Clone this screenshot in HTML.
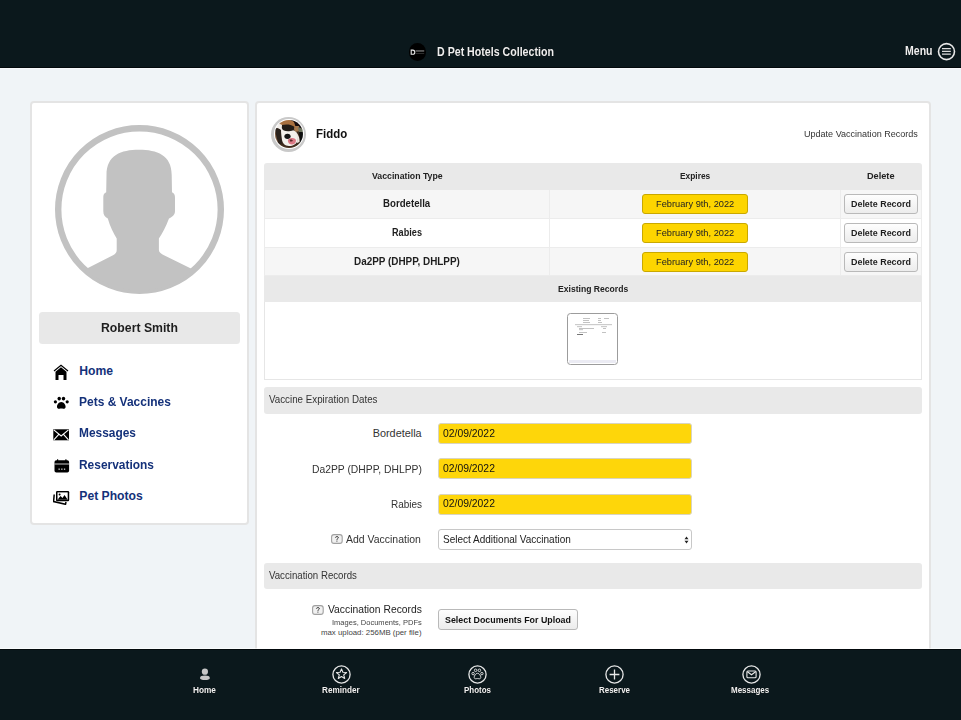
<!DOCTYPE html>
<html><head><meta charset="utf-8">
<style>
*{box-sizing:border-box;margin:0;padding:0}
html,body{width:961px;height:720px;overflow:hidden}
body{background:#f0f4f7;font-family:"Liberation Sans",sans-serif;position:relative}
.a{position:absolute}
.t{position:absolute;white-space:nowrap;line-height:1}
svg{display:block}
</style></head><body>
<div class="a" style="left:0px;top:0px;width:961px;height:68px;background:#0b181c;border-bottom:1px solid #03090c;box-shadow:0 1px 0 rgba(255,255,255,.45)"></div>
<div class="a" style="left:408.7px;top:43px;width:17.6px;height:17.6px;border-radius:50%;background:#000"><svg width="18" height="18" viewBox="0 0 18 18" style="position:absolute;left:0;top:0"><path d="M2.2 7.1h1.6c1.4 0 2 .9 2 2.1s-.6 2.1-2 2.1H2.2z" fill="none" stroke="#e8e8e8" stroke-width="1.1"/><rect x="6.6" y="7.3" width="8.6" height="1.3" fill="#7a7a7a"/><rect x="6.6" y="10.4" width="8.6" height=".6" fill="#4a4a4a"/></svg></div>
<div class="t" style="top:45.41px;font-size:13.04px;color:#efefef;left:437.00px;transform-origin:0 0;font-weight:bold;transform:scaleX(0.8155);text-shadow:0 0 1px #000;">D Pet Hotels Collection</div>
<div class="t" style="top:44.56px;font-size:12.75px;color:#efefef;left:905.00px;transform-origin:0 0;font-weight:bold;transform:scaleX(0.8261);text-shadow:0 0 1px #000;">Menu</div>
<div class="a" style="left:937px;top:42px;width:19px;height:19px"><svg width="19" height="19" viewBox="0 0 19 19"><circle cx="9.5" cy="9.6" r="8" fill="none" stroke="#e8e8e8" stroke-width="1.6"/><path d="M5 6.6 H13.8 M5 9.4 H13.8 M5 12.2 H13.8" stroke="#dcdcdc" stroke-width="1.3"/></svg></div>
<div class="a" style="left:30px;top:101px;width:219px;height:424px;background:#fff;border:2px solid #e4e4e4;border-radius:4px"></div>
<div class="a" style="left:55px;top:125.3px;width:169px;height:169px"><svg width="169" height="169" viewBox="0 0 169 169"><defs><clipPath id="cc"><circle cx="84.5" cy="84.5" r="81"/></clipPath></defs><circle cx="84.5" cy="84.5" r="81.3" fill="none" stroke="#c2c2c2" stroke-width="6.4"/><g clip-path="url(#cc)" fill="#c2c2c2"><path d="M84 24.7 C66 24.7 51.5 30 51.5 50 L51.2 67.3 C48.6 68.5 48.3 70 48.3 73 L48.3 86 C48.3 90 50 92 52.8 93.5 C55 101.5 58.5 108 61.7 113.5 L61.7 125 C61.7 127.5 60.5 129 58 130.3 L28 145.5 L20 170 L150 170 L140 145.5 L109 130.3 C106.5 129 103.9 127.5 103.9 125 L103.9 113.5 C107.5 108 111 101.5 114 93.5 C117 92 120 90 120 86 L120 73 C120 70 119.5 68.5 117 67.3 L116.7 50 C116.7 30 102 24.7 84 24.7 Z"/></g></svg></div>
<div class="a" style="left:39px;top:311.7px;width:201px;height:32.5px;background:#e8e8e8;border-radius:3.5px"></div>
<div class="t" style="top:322.22px;font-size:12.68px;color:#1e1e1e;left:100.80px;transform-origin:0 0;font-weight:bold;transform:scaleX(0.9669);">Robert Smith</div>
<div class="t" style="top:364.75px;font-size:12.17px;color:#14317a;left:79.30px;transform-origin:0 0;font-weight:bold;">Home</div>
<div class="t" style="top:396.05px;font-size:12.17px;color:#14317a;left:79.30px;transform-origin:0 0;font-weight:bold;transform:scaleX(0.9853);">Pets &amp; Vaccines</div>
<div class="t" style="top:427.05px;font-size:12.17px;color:#14317a;left:79.30px;transform-origin:0 0;font-weight:bold;transform:scaleX(0.9795);">Messages</div>
<div class="t" style="top:458.90px;font-size:12.17px;color:#14317a;left:79.30px;transform-origin:0 0;font-weight:bold;transform:scaleX(0.9810);">Reservations</div>
<div class="t" style="top:489.90px;font-size:12.17px;color:#14317a;left:79.30px;transform-origin:0 0;font-weight:bold;">Pet Photos</div>
<div class="a" style="left:53px;top:363.5px;width:17px;height:17px"><svg width="17" height="17" viewBox="0 0 17 17"><path d="M1 7 L8 1.2 L15 7" fill="none" stroke="#000" stroke-width="1.2"/><path d="M2.5 7.8 L8 3.3 L13.5 7.8 L13.5 16 L10.5 16 L10.5 11 L5.5 11 L5.5 16 L2.5 16 Z" fill="#000"/></svg></div>
<div class="a" style="left:53px;top:396px;width:17px;height:14px"><svg width="17" height="14" viewBox="0 0 17 14"><ellipse cx="6.2" cy="2.6" rx="1.7" ry="1.9" fill="#000"/><ellipse cx="10.5" cy="2.6" rx="1.7" ry="1.9" fill="#000"/><ellipse cx="2.4" cy="5.8" rx="1.6" ry="1.6" fill="#000"/><ellipse cx="14.2" cy="5.8" rx="1.6" ry="1.6" fill="#000"/><path d="M8.3 6 C5.5 6 4 9 4 10.8 C4 12.6 5.5 13 6.5 12.7 C7.5 12.4 9.1 12.4 10.1 12.7 C11.1 13 12.6 12.6 12.6 10.8 C12.6 9 11.1 6 8.3 6Z" fill="#000"/></svg></div>
<div class="a" style="left:53px;top:428.5px;width:17px;height:12px"><svg width="17" height="12" viewBox="0 0 17 12"><rect x="0.3" y="0.3" width="15.7" height="11" fill="#000"/><path d="M0.8 0.8 L8.15 7 L15.5 0.8 M0.8 10.8 L5.8 5.3 M15.5 10.8 L10.5 5.3" fill="none" stroke="#fff" stroke-width="1.1"/></svg></div>
<div class="a" style="left:53.5px;top:458.5px;width:16px;height:14px"><svg width="16" height="14" viewBox="0 0 16 14"><rect x="0.5" y="1.2" width="14.6" height="12.3" rx="1.8" fill="#000"/><rect x="0.5" y="4.6" width="14.6" height="0.8" fill="#fff"/><rect x="3" y="0.3" width="1.2" height="2.2" fill="#000"/><rect x="11.3" y="0.3" width="1.2" height="2.2" fill="#000"/><rect x="4.5" y="9.6" width="1.3" height="1.1" fill="#fff"/><rect x="7.2" y="9.6" width="1.3" height="1.1" fill="#fff"/><rect x="9.9" y="9.6" width="1.3" height="1.1" fill="#fff"/></svg></div>
<div class="a" style="left:53px;top:490px;width:17px;height:15px"><svg width="17" height="15" viewBox="0 0 17 15"><path d="M1.2 4.5 L0.6 11.5 L12.5 14.3 L13 12" fill="none" stroke="#000" stroke-width="1.5"/><rect x="3" y="1" width="13.2" height="10.2" rx="1.2" fill="#000"/><rect x="4.5" y="2.4" width="10.2" height="7.4" fill="#fff"/><path d="M4.5 9.8 L7.5 6 L9.5 8 L11.5 5 L14.7 9.8Z" fill="#000"/><circle cx="6.6" cy="4.4" r="1" fill="#000"/></svg></div>
<div class="a" style="left:255px;top:101px;width:676px;height:619px;background:#fff;border:2px solid #e4e4e4;border-radius:4px"></div>
<div class="a" style="left:271.2px;top:116.6px;width:35px;height:35px;border-radius:50%;background:#c9c9c9"><div style="position:absolute;left:2.6px;top:2.6px;width:29.8px;height:29.8px;border-radius:50%;background:#fff"></div><svg width="28" height="28" viewBox="0 0 28 28" style="position:absolute;left:3.5px;top:3.5px"><defs><clipPath id="pc"><circle cx="14" cy="14" r="14"/></clipPath><filter id="bl" x="-20%" y="-20%" width="140%" height="140%"><feGaussianBlur stdDeviation="0.7"/></filter></defs><g clip-path="url(#pc)"><g filter="url(#bl)"><rect x="-2" y="-2" width="32" height="32" fill="#3a2a1e"/><path d="M15 -1 L26 2 L28 8 L22 8 L17 5Z" fill="#141010"/><path d="M18 6 L24 6 L25 11 L20 12Z" fill="#a57a50"/><path d="M23 7 L28 9 L28 13 L24 13Z" fill="#6e7460"/><path d="M24 12 L30 12 L30 24 L25 22Z" fill="#0e0c0a"/><path d="M4 1 C8 -1 15 -1 19 2 L21 8 L17 6 C13 5 9 5 7 8 L5 8Z" fill="#a9713f"/><path d="M-1 6 C2 4 5 3 7 5 L8 10 L5 10 C3 8 1 8 -1 9Z" fill="#f2eeea"/><path d="M-2 9 C1 8 4 8 6 10 C7.5 14 7.5 19 7 23 L3 26 L-2 26Z" fill="#2c221c"/><path d="M0 10 C1 14 1.5 18 3 22 L1.5 24 L-1 20Z" fill="#7a5a40"/><path d="M6 10 C9 9.5 14 10 19 10.5 C22 12 23 16 22.5 20 C22 24 18 26 14 26 C10 26 7.5 23 7 20 C6.5 16 6 13 6 10Z" fill="#f4f1ec"/><path d="M21 12 C23 14 25 18 24.5 22 L22 23 C22.5 19 22 15 20.5 13Z" fill="#ece8e2"/><path d="M7 5 C10 4 16 4 19 6.5 C20 9 18 11 14 11.2 C10 11.4 7.5 10.5 6.8 8Z" fill="#231c18"/><ellipse cx="12.5" cy="16.3" rx="3.1" ry="2.6" fill="#121212"/><path d="M13 19.5 C15.5 17 21 17.5 21 20.5 C21 24.5 16.5 25.5 14 23.5 C13 22.5 12.6 20.5 13 19.5Z" fill="#dc7a86"/><path d="M14.5 19.8 C16 19 17.5 19.5 18 21 L15.5 21.8Z" fill="#5a2a2a"/><path d="M3 23 C7 25 11 27 16 27 L21 25 L24 29 L0 29Z" fill="#4a3424"/></g></g></svg></div>
<div class="t" style="top:128.15px;font-size:12.17px;color:#111;left:316.00px;transform-origin:0 0;font-weight:bold;transform:scaleX(0.9422);">Fiddo</div>
<div class="t" style="top:129.89px;font-size:8.84px;color:#333;left:803.90px;transform-origin:0 0;transform:scaleX(1.0234);">Update Vaccination Records</div>
<div class="a" style="left:264px;top:163.2px;width:657.6px;height:26.700000000000017px;background:#e9e9e9;border-radius:3px 3px 0 0"></div>
<div class="a" style="left:264px;top:189.9px;width:657.6px;height:29.0px;background:#f6f6f6;border-left:1px solid #ececec;border-right:1px solid #ececec;border-bottom:1px solid #ececec"></div>
<div class="a" style="left:264px;top:218.9px;width:657.6px;height:29.0px;background:#fff;border-left:1px solid #ececec;border-right:1px solid #ececec;border-bottom:1px solid #ececec"></div>
<div class="a" style="left:264px;top:247.9px;width:657.6px;height:27.900000000000006px;background:#f6f6f6;border-left:1px solid #ececec;border-right:1px solid #ececec;border-bottom:1px solid #ececec"></div>
<div class="a" style="left:549px;top:189.9px;width:1px;height:85.9px;background:#ececec"></div>
<div class="a" style="left:840px;top:189.9px;width:1px;height:85.9px;background:#ececec"></div>
<div class="t" style="top:172.04px;font-size:9.13px;color:#222;left:371.70px;transform-origin:0 0;font-weight:bold;transform:scaleX(0.9566);">Vaccination Type</div>
<div class="t" style="top:172.09px;font-size:8.84px;color:#222;left:679.90px;transform-origin:0 0;font-weight:bold;transform:scaleX(0.9481);">Expires</div>
<div class="t" style="top:172.33px;font-size:8.55px;color:#222;left:867.00px;transform-origin:0 0;font-weight:bold;transform:scaleX(1.0720);">Delete</div>
<div class="t" style="top:198.93px;font-size:10.43px;color:#1e1e1e;left:383.30px;transform-origin:0 0;font-weight:bold;transform:scaleX(0.9270);">Bordetella</div>
<div class="a" style="left:642.3px;top:193.9px;width:105.70000000000005px;height:20.0px;background:#fdd500;border:1px solid #c9a800;border-radius:3px"></div>
<div class="t" style="top:199.15px;font-size:9.71px;color:#222;left:655.80px;transform-origin:0 0;transform:scaleX(0.9543);">February 9th, 2022</div>
<div class="a" style="left:844.4px;top:193.70000000000002px;width:73.60000000000002px;height:20.099999999999994px;background:linear-gradient(#fefefe,#ececec);border:1px solid #b9b9b9;border-radius:3px"></div>
<div class="t" style="top:199.39px;font-size:9.42px;color:#1e1e1e;left:850.80px;transform-origin:0 0;font-weight:bold;transform:scaleX(0.9471);">Delete Record</div>
<div class="t" style="top:227.98px;font-size:10.43px;color:#1e1e1e;left:392.00px;transform-origin:0 0;font-weight:bold;transform:scaleX(0.8765);">Rabies</div>
<div class="a" style="left:642.3px;top:222.95000000000002px;width:105.70000000000005px;height:20.0px;background:#fdd500;border:1px solid #c9a800;border-radius:3px"></div>
<div class="t" style="top:228.20px;font-size:9.71px;color:#222;left:655.80px;transform-origin:0 0;transform:scaleX(0.9543);">February 9th, 2022</div>
<div class="a" style="left:844.4px;top:222.75000000000003px;width:73.60000000000002px;height:20.099999999999994px;background:linear-gradient(#fefefe,#ececec);border:1px solid #b9b9b9;border-radius:3px"></div>
<div class="t" style="top:228.44px;font-size:9.42px;color:#1e1e1e;left:850.80px;transform-origin:0 0;font-weight:bold;transform:scaleX(0.9471);">Delete Record</div>
<div class="t" style="top:257.03px;font-size:10.43px;color:#1e1e1e;left:353.60px;transform-origin:0 0;font-weight:bold;transform:scaleX(0.9503);">Da2PP (DHPP, DHLPP)</div>
<div class="a" style="left:642.3px;top:252.0px;width:105.70000000000005px;height:20.0px;background:#fdd500;border:1px solid #c9a800;border-radius:3px"></div>
<div class="t" style="top:257.25px;font-size:9.71px;color:#222;left:655.80px;transform-origin:0 0;transform:scaleX(0.9543);">February 9th, 2022</div>
<div class="a" style="left:844.4px;top:251.8px;width:73.60000000000002px;height:20.099999999999966px;background:linear-gradient(#fefefe,#ececec);border:1px solid #b9b9b9;border-radius:3px"></div>
<div class="t" style="top:257.49px;font-size:9.42px;color:#1e1e1e;left:850.80px;transform-origin:0 0;font-weight:bold;transform:scaleX(0.9471);">Delete Record</div>
<div class="a" style="left:264px;top:275.8px;width:657.6px;height:26.0px;background:#e9e9e9"></div>
<div class="t" style="top:284.07px;font-size:9.57px;color:#222;left:557.70px;transform-origin:0 0;font-weight:bold;transform:scaleX(0.8983);">Existing Records</div>
<div class="a" style="left:264px;top:301.8px;width:657.6px;height:77.80000000000001px;background:#fff;border:1px solid #e6e6e6;border-top:none"></div>
<div class="a" style="left:566.5px;top:313.2px;width:51.3px;height:51.7px;border:1.2px solid #9c9c9c;border-radius:3.5px;background:#fff"><svg width="49" height="49" viewBox="0 0 49 49" style="position:absolute;left:0;top:0"><rect x="1" y="46" width="47" height="3" fill="#ebebf3"/><g fill="#9a9a9a"><rect x="15" y="4" width="4" height=".6"/><rect x="19" y="4" width="3" height=".6"/><rect x="30" y="4" width="3" height=".6"/><rect x="36" y="4" width="5" height=".6"/><rect x="15" y="6" width="6" height=".6"/><rect x="30" y="6" width="3" height=".6"/><rect x="15" y="8" width="7" height=".6"/><rect x="30" y="8" width="4" height=".6"/><rect x="7" y="10.5" width="37" height=".6"/><rect x="9" y="12.5" width="5" height=".6"/><rect x="33" y="12.5" width="6" height=".6"/><rect x="11" y="14" width="15" height=".6"/><rect x="35" y="14" width="3" height=".6"/><rect x="11" y="15.5" width="4" height=".6"/><rect x="11" y="18" width="8" height=".6"/><rect x="34" y="18" width="4" height=".6"/></g><rect x="9" y="20" width="6" height=".8" fill="#555"/></svg></div>
<div class="a" style="left:264px;top:387.1px;width:657.6px;height:26.5px;background:#e9e9e9;border-radius:3px"></div>
<div class="t" style="top:395.38px;font-size:10.14px;color:#333;left:269.40px;transform-origin:0 0;transform:scaleX(0.9653);">Vaccine Expiration Dates</div>
<div class="t" style="top:428.36px;font-size:10.87px;color:#333;left:372.70px;transform-origin:0 0;">Bordetella</div>
<div class="a" style="left:438px;top:423px;width:254px;height:21px;background:#fed60a;border:1px solid #d8d4c0;border-radius:3px"></div>
<div class="t" style="top:429.08px;font-size:10.14px;color:#111;left:442.60px;transform-origin:0 0;transform:scaleX(1.0241);">02/09/2022</div>
<div class="t" style="top:463.56px;font-size:10.87px;color:#333;left:311.60px;transform-origin:0 0;transform:scaleX(0.9516);">Da2PP (DHPP, DHLPP)</div>
<div class="a" style="left:438px;top:458px;width:254px;height:21px;background:#fed60a;border:1px solid #d8d4c0;border-radius:3px"></div>
<div class="t" style="top:464.28px;font-size:10.14px;color:#111;left:442.60px;transform-origin:0 0;transform:scaleX(1.0241);">02/09/2022</div>
<div class="t" style="top:498.76px;font-size:10.87px;color:#333;left:390.50px;transform-origin:0 0;transform:scaleX(0.9185);">Rabies</div>
<div class="a" style="left:438px;top:494px;width:254px;height:21px;background:#fed60a;border:1px solid #d8d4c0;border-radius:3px"></div>
<div class="t" style="top:499.48px;font-size:10.14px;color:#111;left:442.60px;transform-origin:0 0;transform:scaleX(1.0241);">02/09/2022</div>
<div class="a" style="left:330.6px;top:534.3px;width:12px;height:10px"><svg width="12" height="10" viewBox="0 0 12 10"><rect x="0.6" y="0.6" width="10.6" height="8.8" rx="2.4" fill="#f1f1f1" stroke="#a0a0a0" stroke-width="1.1"/><path d="M4.4 3.6 C4.4 2.4 7.4 2.2 7.4 3.6 C7.4 4.6 5.9 4.6 5.9 5.8" fill="none" stroke="#333" stroke-width="1"/><rect x="5.4" y="6.6" width="1" height="1" fill="#333"/></svg></div>
<div class="t" style="top:534.04px;font-size:11.01px;color:#333;left:346.40px;transform-origin:0 0;transform:scaleX(0.9517);">Add Vaccination</div>
<div class="a" style="left:438px;top:529px;width:254px;height:21px;background:#fff;border:1px solid #c8c8c8;border-radius:3px"></div>
<div class="t" style="top:534.63px;font-size:10.43px;color:#222;left:442.60px;transform-origin:0 0;transform:scaleX(0.9606);">Select Additional Vaccination</div>
<div class="a" style="left:683.5px;top:535.5px;width:5px;height:8px"><svg width="5" height="8" viewBox="0 0 5 8"><path d="M0.5 3.3 L2.5 0.6 L4.5 3.3Z M0.5 4.7 L2.5 7.4 L4.5 4.7Z" fill="#222"/></svg></div>
<div class="a" style="left:264px;top:562.8px;width:657.6px;height:26.5px;background:#e9e9e9;border-radius:3px"></div>
<div class="t" style="top:571.03px;font-size:10.43px;color:#333;left:269.40px;transform-origin:0 0;transform:scaleX(0.9272);">Vaccination Records</div>
<div class="a" style="left:312.2px;top:604.9px;width:12px;height:10px"><svg width="12" height="10" viewBox="0 0 12 10"><rect x="0.6" y="0.6" width="10.6" height="8.8" rx="2.4" fill="#f1f1f1" stroke="#a0a0a0" stroke-width="1.1"/><path d="M4.4 3.6 C4.4 2.4 7.4 2.2 7.4 3.6 C7.4 4.6 5.9 4.6 5.9 5.8" fill="none" stroke="#333" stroke-width="1"/><rect x="5.4" y="6.6" width="1" height="1" fill="#333"/></svg></div>
<div class="t" style="top:604.73px;font-size:10.43px;color:#222;left:327.60px;transform-origin:0 0;transform:scaleX(0.9905);">Vaccination Records</div>
<div class="t" style="top:618.65px;font-size:7.83px;color:#444;left:331.80px;transform-origin:0 0;transform:scaleX(0.9602);">Images, Documents, PDFs</div>
<div class="t" style="top:629.05px;font-size:7.83px;color:#444;left:321.00px;transform-origin:0 0;">max upload: 256MB (per file)</div>
<div class="a" style="left:438px;top:609.2px;width:140px;height:20.5px;background:linear-gradient(#fefefe,#ececec);border:1px solid #b9b9b9;border-radius:3px"></div>
<div class="t" style="top:614.75px;font-size:9.71px;color:#111;left:444.70px;transform-origin:0 0;font-weight:bold;transform:scaleX(0.9122);">Select Documents For Upload</div>
<div class="a" style="left:0px;top:649px;width:961px;height:71px;background:#0b181c;border-top:1px solid #03090c;box-shadow:0 -1px 0 rgba(255,255,255,.6)"></div>
<div class="t" style="top:685.81px;font-size:8.70px;color:#f2f2f2;left:193.10px;transform-origin:0 0;font-weight:bold;transform:scaleX(0.9514);text-shadow:0 0 1px #000;">Home</div>
<div class="t" style="top:685.81px;font-size:8.70px;color:#f2f2f2;left:322.30px;transform-origin:0 0;font-weight:bold;transform:scaleX(0.9380);text-shadow:0 0 1px #000;">Reminder</div>
<div class="t" style="top:685.81px;font-size:8.70px;color:#f2f2f2;left:464.10px;transform-origin:0 0;font-weight:bold;transform:scaleX(0.9159);text-shadow:0 0 1px #000;">Photos</div>
<div class="t" style="top:685.81px;font-size:8.70px;color:#f2f2f2;left:598.60px;transform-origin:0 0;font-weight:bold;transform:scaleX(0.9165);text-shadow:0 0 1px #000;">Reserve</div>
<div class="t" style="top:685.81px;font-size:8.70px;color:#f2f2f2;left:731.20px;transform-origin:0 0;font-weight:bold;transform:scaleX(0.9214);text-shadow:0 0 1px #000;">Messages</div>
<div class="a" style="left:199px;top:668px;width:12px;height:13px"><svg width="12" height="13" viewBox="0 0 12 13"><circle cx="5.9" cy="3.7" r="3.1" fill="#c6c6c6"/><path d="M1 10 C1 8 3 7.4 6 7.4 C9 7.4 10.8 8 10.8 10 C10.8 11.5 9 12 6 12 C3 12 1 11.5 1 10Z" fill="#c6c6c6"/></svg></div>
<div class="a" style="left:331.8px;top:664.8px;width:19px;height:19px"><svg width="19" height="19" viewBox="0 0 19 19"><circle cx="9.5" cy="9.5" r="8.6" fill="none" stroke="#e8e8e8" stroke-width="1.3"/><path d="M9.5 3.9 L10.9 7.3 L14.6 7.5 L11.7 9.9 L12.7 13.5 L9.5 11.5 L6.3 13.5 L7.3 9.9 L4.4 7.5 L8.1 7.3Z" fill="none" stroke="#e8e8e8" stroke-width="1.1" stroke-linejoin="round"/></svg></div>
<div class="a" style="left:468.3px;top:664.8px;width:19px;height:19px"><svg width="19" height="19" viewBox="0 0 19 19"><circle cx="9.5" cy="9.5" r="8.6" fill="none" stroke="#e8e8e8" stroke-width="1.3"/><g fill="none" stroke="#e8e8e8" stroke-width="0.9"><circle cx="7.6" cy="5.3" r="1.3"/><circle cx="11.4" cy="5.3" r="1.3"/><circle cx="5.1" cy="8.6" r="1.2"/><circle cx="13.9" cy="8.6" r="1.2"/><path d="M9.5 8.3 C7.5 8.3 6.2 11 6.2 12.4 C6.2 13.6 7.2 14 8.2 13.7 C9 13.5 10 13.5 10.8 13.7 C11.8 14 12.8 13.6 12.8 12.4 C12.8 11 11.5 8.3 9.5 8.3Z"/></g></svg></div>
<div class="a" style="left:604.7px;top:664.8px;width:19px;height:19px"><svg width="19" height="19" viewBox="0 0 19 19"><circle cx="9.5" cy="9.5" r="8.6" fill="none" stroke="#e8e8e8" stroke-width="1.3"/><path d="M9.5 4.6 V14.4 M4.6 9.5 H14.4" stroke="#e8e8e8" stroke-width="1.3"/></svg></div>
<div class="a" style="left:741.5px;top:664.8px;width:19px;height:19px"><svg width="19" height="19" viewBox="0 0 19 19"><circle cx="9.5" cy="9.5" r="8.6" fill="none" stroke="#e8e8e8" stroke-width="1.3"/><rect x="4.9" y="6" width="9.2" height="6.8" rx="1" fill="none" stroke="#e8e8e8" stroke-width="1.1"/><path d="M5.4 6.8 L9.5 9.8 L13.6 6.8" fill="none" stroke="#e8e8e8" stroke-width="1.1"/></svg></div>
</body></html>
